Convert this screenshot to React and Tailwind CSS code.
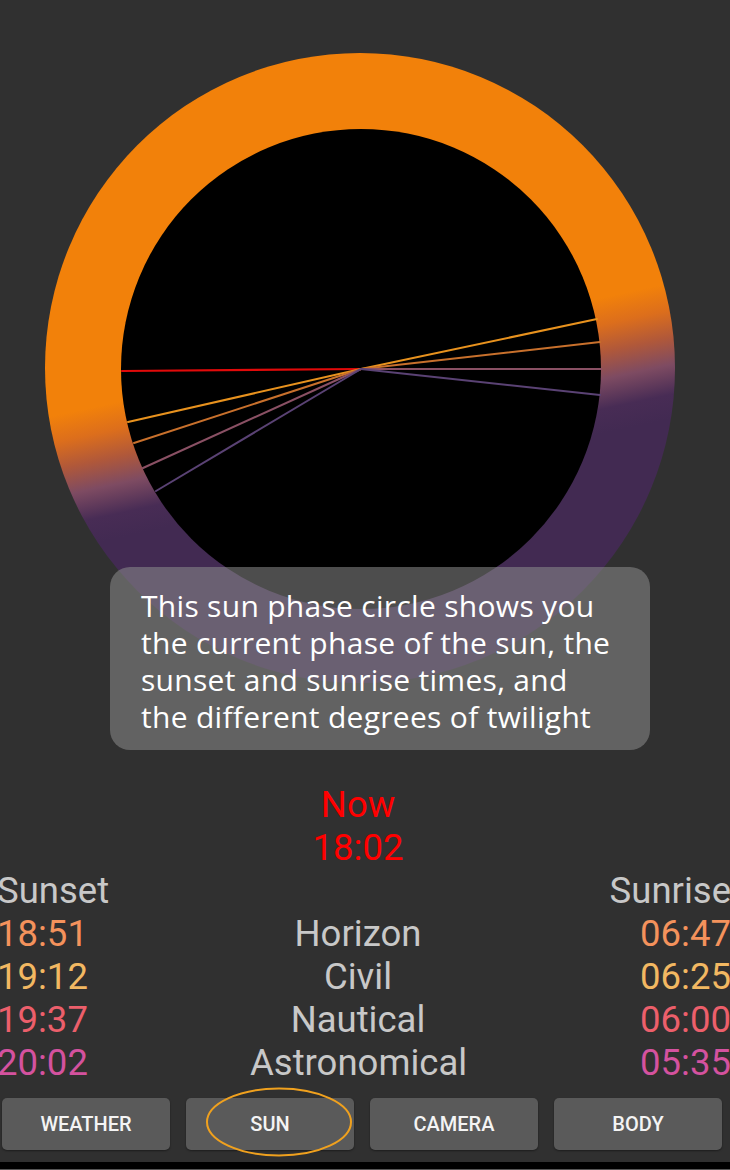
import React from "react"

const CX = 361
const CY = 369

const rays = [
  { x: 122, y: 371, color: "#e10a0a", w: 2.2 },
  { x: 128, y: 422, color: "#e8921e", w: 2 },
  { x: 134, y: 443, color: "#c8702c", w: 2 },
  { x: 143, y: 468, color: "#8a5064", w: 2 },
  { x: 156, y: 491, color: "#5a4274", w: 2 },
  { x: 597, y: 319, color: "#e8921e", w: 2 },
  { x: 600, y: 342, color: "#c8702c", w: 2 },
  { x: 601, y: 369, color: "#8a5064", w: 2 },
  { x: 600, y: 395, color: "#5a4274", w: 2 },
]

const rows = [
  { set: "18:51", name: "Horizon", rise: "06:47", color: "text-[#f4925c]" },
  { set: "19:12", name: "Civil", rise: "06:25", color: "text-[#f2b862]" },
  { set: "19:37", name: "Nautical", rise: "06:00", color: "text-[#ec5f6b]" },
  { set: "20:02", name: "Astronomical", rise: "05:35", color: "text-[#d4529f]" },
]

function SunCircle() {
  return (
    <svg width="730" height="700" viewBox="0 0 730 700" className="block">
      <defs>
        <linearGradient id="ring" gradientUnits="userSpaceOnUse" x1="350" y1="352" x2="378" y2="482">
          <stop offset="0" stopColor="#f2810a" />
          <stop offset="0.2" stopColor="#dc6e1c" />
          <stop offset="0.4" stopColor="#b0583a" />
          <stop offset="0.6" stopColor="#7e4b62" />
          <stop offset="0.82" stopColor="#482c55" />
          <stop offset="1" stopColor="#422a52" />
        </linearGradient>
      </defs>
      <circle cx={CX - 1} cy={CY - 1} r="315" fill="url(#ring)" />
      <circle cx={CX} cy={CY} r="240" fill="#000" />
      {rays.map((r, i) => (
        <line key={i} x1={CX} y1={CY} x2={r.x} y2={r.y} stroke={r.color} strokeWidth={r.w} strokeLinecap="round" />
      ))}
    </svg>
  )
}

export default function App() {
  return (
    <div className="relative flex h-[1170px] w-[730px] flex-col overflow-hidden bg-[#303030]" style={{ fontFamily: "Roboto, sans-serif" }}>
      <div className="relative h-[783px]">
        <SunCircle />
        <div
          className="absolute left-[110px] top-[567px] w-[540px] rounded-[20px] bg-[rgba(140,140,140,0.55)] pb-[15px] pl-[31px] pt-[20px] text-[30px] leading-[37px] tracking-[0.3px] text-white"
          style={{ fontFamily: "'Open Sans', sans-serif" }}
        >
          This sun phase circle shows you
          <br />
          the current phase of the sun, the
          <br />
          sunset and sunrise times, and
          <br />
          the different degrees of twilight
        </div>
      </div>

      <div className="-ml-[3px] grid w-[734px] grid-cols-[253px_216px_1fr] text-[36.5px] leading-[43px]">
        <div />
        <div className="text-center text-[#ff0000]">Now</div>
        <div />
        <div />
        <div className="text-center text-[#ff0000]">18:02</div>
        <div />
        <div className="text-[#c8c8c8]">Sunset</div>
        <div />
        <div className="text-right text-[#c8c8c8]">Sunrise</div>
        {rows.map((r) => (
          <React.Fragment key={r.name}>
            <div className={r.color}>{r.set}</div>
            <div className="text-center text-[#c8c8c8]">{r.name}</div>
            <div className={"text-right " + r.color}>{r.rise}</div>
          </React.Fragment>
        ))}
      </div>

      <div className="relative mt-[14px] flex gap-4 px-[2px]">
        {["WEATHER", "SUN", "CAMERA", "BODY"].map((b) => (
          <button
            key={b}
            className="flex h-[52px] w-[168px] items-center justify-center rounded-[5px] bg-[#5a5a5a] text-[20px] font-medium text-[#f4f4f4] shadow-[0_1px_2px_rgba(0,0,0,0.4)]"
          >
            {b}
          </button>
        ))}
        <svg className="absolute left-[204px] top-[-12px]" width="150" height="72" viewBox="0 0 150 72">
          <ellipse cx="75" cy="36" rx="72" ry="33.5" fill="none" stroke="#f0a11e" strokeWidth="2" />
        </svg>
      </div>

      <div className="mt-auto h-[8px] border-b border-[#555] bg-black" />
    </div>
  )
}
